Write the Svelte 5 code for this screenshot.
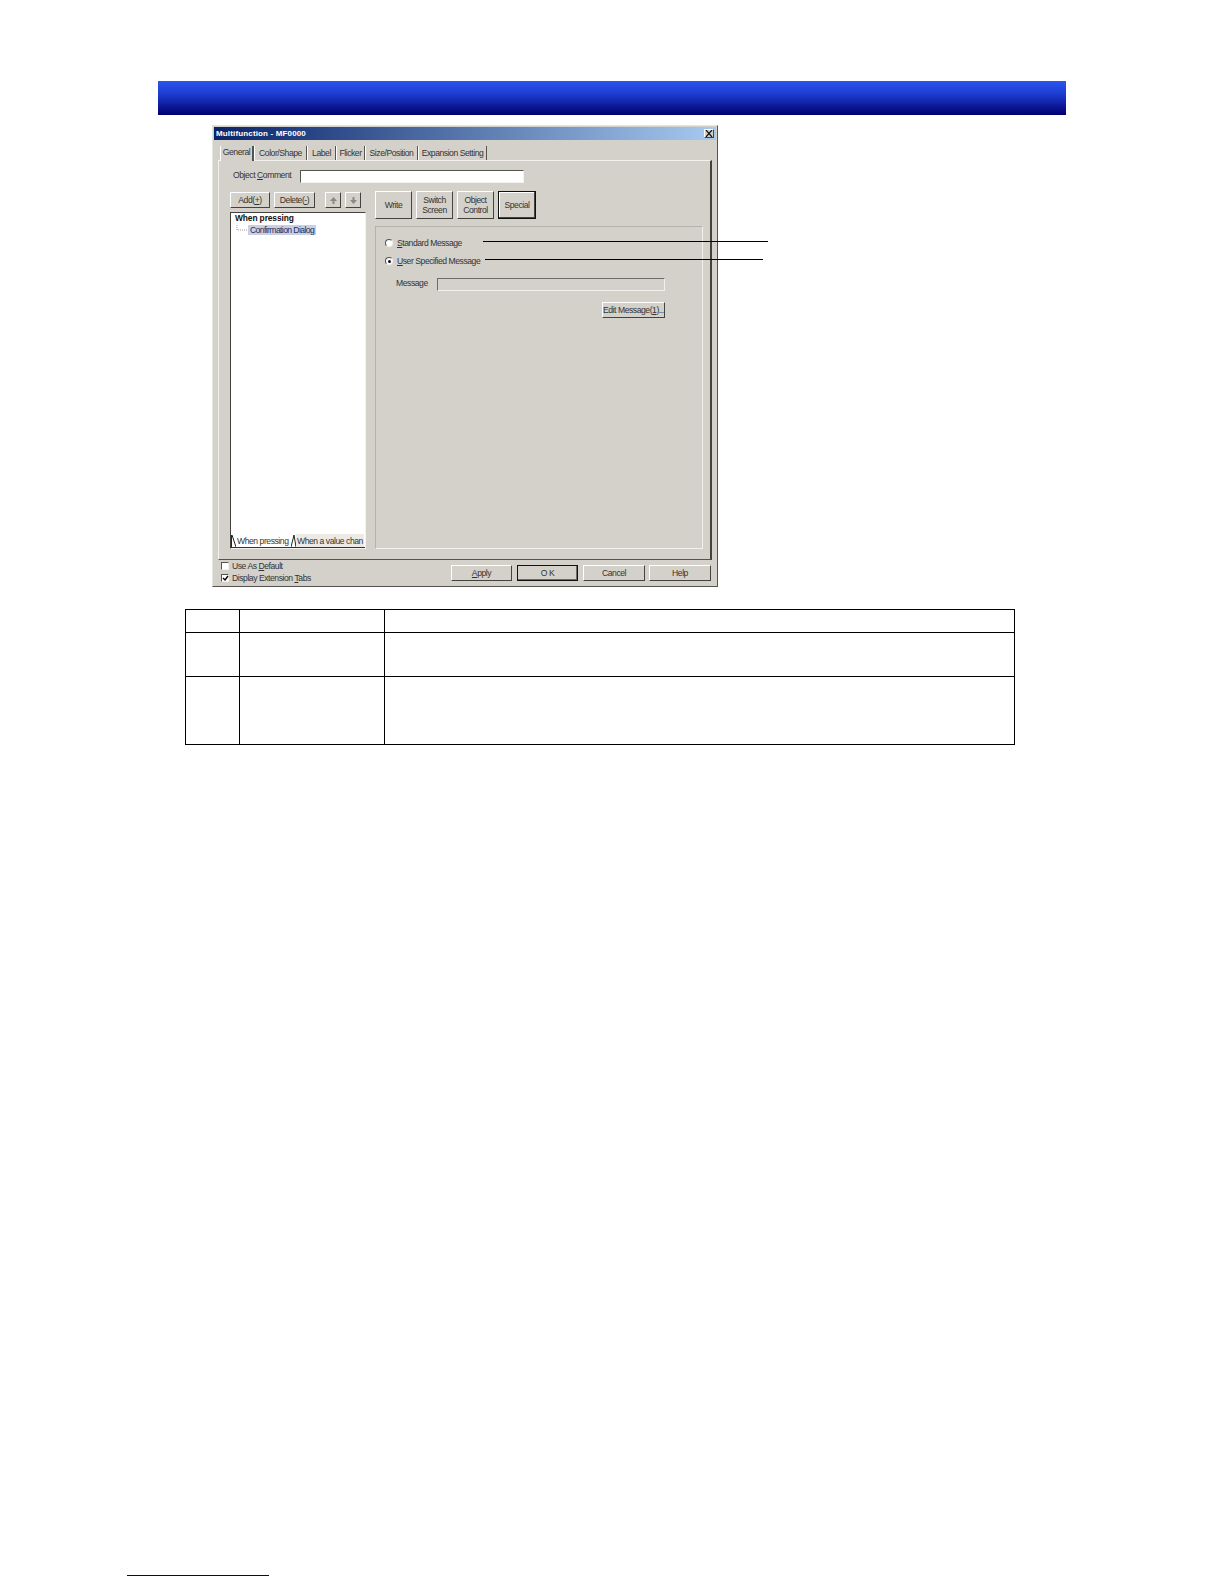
<script>
	const tabs = ['General', 'Color/Shape', 'Label', 'Flicker', 'Size/Position', 'Expansion Setting'];
	const tabWidths = [34, 53, 29, 29, 53, 69];
</script>

<main class="page">
	<div class="banner"></div>

	<section class="dialog">
		<header class="title">
			<span>Multifunction - MF0000</span>
			<button class="close" aria-label="Close">
				<svg width="8" height="7" viewBox="0 0 8 7"><path d="M1 0l6 7M7 0L1 7" stroke="#111" stroke-width="1.2" fill="none" /></svg>
			</button>
		</header>

		<nav class="tabs">
			{#each tabs as tab, i}
				<div class="tab" class:active={i === 0} style="width: {tabWidths[i]}px">{tab}</div>
			{/each}
		</nav>

		<div class="panel">
			<div class="comment-row">
				<label class="comment-label" for="comment">Object <u>C</u>omment</label>
				<input id="comment" class="comment-input" />
			</div>

			<div class="main">
				<div class="left">
					<div class="list-tools">
						<button class="btn add">Add(<u>+</u>)</button>
						<button class="btn delete">Delete(<u>-</u>)</button>
						<button class="btn arrow" aria-label="Move up">
							<svg width="9" height="9" viewBox="0 0 9 9"><path d="M4.5 1L8 5H5.5v3h-2V5H1z" fill="#8b8982" /></svg>
						</button>
						<button class="btn arrow" aria-label="Move down">
							<svg width="9" height="9" viewBox="0 0 9 9"><path d="M4.5 8L8 4H5.5V1h-2v3H1z" fill="#8b8982" /></svg>
						</button>
					</div>

					<div class="tree">
						<div class="tree-body">
							<div class="tree-root">When pressing</div>
							<div class="tree-item">
								<svg class="connector" width="11" height="10" viewBox="0 0 11 10"><path d="M1 0v5h10" stroke="#999" stroke-dasharray="1 1" fill="none" /></svg>
								<span class="selected">Confirmation Dialog</span>
							</div>
						</div>
						<div class="tree-tabs">
							<svg width="5" height="12" viewBox="0 0 5 12"><path d="M0.5 0v12M1 0l4 12" stroke="#222" fill="none" /></svg>
							<span class="tree-tab on">When pressing</span>
							<svg width="5" height="12" viewBox="0 0 5 12"><path d="M0 12L3 0l2 12" stroke="#222" fill="none" /></svg>
							<span class="tree-tab">When a value chan</span>
						</div>
					</div>
				</div>

				<div class="right">
					<div class="modes">
						<button class="btn mode w37">Write</button>
						<button class="btn mode w37">Switch<br />Screen</button>
						<button class="btn mode w37">Object<br />Control</button>
						<button class="btn mode special">Special</button>
					</div>

					<div class="group">
						<div class="radio-row">
							<span class="radio"></span>
							<span><u>S</u>tandard Message</span>
						</div>
						<div class="radio-row">
							<span class="radio checked"></span>
							<span><u>U</u>ser Specified Message</span>
						</div>
						<div class="message-row">
							<span class="message-label">Message</span>
							<div class="message-field"></div>
						</div>
						<div class="edit-row">
							<button class="btn edit">Edit Message(<u>1</u>)...</button>
						</div>
					</div>
				</div>
			</div>
		</div>

		<footer class="foot">
			<div class="checks">
				<div class="check-row">
					<span class="check"></span>
					<span>Use As <u>D</u>efault</span>
				</div>
				<div class="check-row">
					<span class="check">
						<svg width="7" height="7" viewBox="0 0 7 7"><path d="M1 3l2 2 3-4" stroke="#000" stroke-width="1.4" fill="none" /></svg>
					</span>
					<span>Display Extension <u>T</u>abs</span>
				</div>
			</div>
			<div class="actions">
				<button class="btn action"><u>A</u>pply</button>
				<button class="btn action default">O K</button>
				<button class="btn action">Cancel</button>
				<button class="btn action">Help</button>
			</div>
		</footer>

		<!-- callout lines run from the radio labels out past the dialog -->
		<div class="callout one"></div>
		<div class="callout two"></div>
	</section>

	<table class="info">
		<colgroup>
			<col class="c1" />
			<col class="c2" />
			<col />
		</colgroup>
		<tbody>
			<tr class="r1"><td></td><td></td><td></td></tr>
			<tr class="r2"><td></td><td></td><td></td></tr>
			<tr class="r3"><td></td><td></td><td></td></tr>
		</tbody>
	</table>

	<div class="page-link"></div>
</main>

<style>
	:global(body) {
		margin: 0;
		background: #fff;
	}

	.page {
		height: 1584px;
		padding-top: 81px;
		box-sizing: border-box;
		overflow: hidden;
		font-family: 'Liberation Sans', Arial, sans-serif;
	}

	.banner {
		width: 908px;
		height: 34px;
		margin-left: 158px;
		background: linear-gradient(#2b55ee, #1f3fd4 35%, #00006e);
	}

	.dialog {
		position: relative;
		box-sizing: border-box;
		width: 506px;
		height: 462px;
		margin: 10px 0 0 212px;
		padding: 1px;
		background: #d4d1ca;
		border: 1px solid;
		border-color: #e4e4e0 #55534e #55534e #e4e4e0;
		font-size: 8.6px;
		letter-spacing: -0.45px;
		color: #333;
		filter: blur(0.45px);
	}

	.title {
		display: flex;
		align-items: center;
		justify-content: space-between;
		height: 13px;
		padding: 0 2px;
		background: linear-gradient(90deg, #0a246a, #a6caf0);
		color: #fff;
		font-weight: bold;
		font-size: 8px;
		letter-spacing: 0.15px;
	}

	.close {
		display: flex;
		align-items: center;
		justify-content: center;
		width: 10px;
		height: 9px;
		padding: 0;
		background: #d4d1ca;
		border: 1px solid;
		border-color: #fff #444 #444 #fff;
	}

	.tabs {
		display: flex;
		height: 14px;
		margin: 6px 0 0 5px;
		padding-left: 1px;
	}

	.tab {
		box-sizing: border-box;
		flex: none;
		text-align: center;
		line-height: 15px;
		white-space: nowrap;
		border-right: 1px solid #55534e;
		border-left: 1px solid #fff;
	}

	.tab.active {
		height: 15px;
		line-height: 12px;
		position: relative;
		background: #d4d1ca;
		border-right-width: 2px;
	}

	.panel {
		box-sizing: border-box;
		height: 400px;
		margin: 0 4px;
		padding: 9px 0 0 10px;
		border: 1px solid;
		border-width: 1px 2px 1px 1px;
		border-color: #f2f1ee #44423e #55534e #f2f1ee;
	}

	.comment-row {
		display: flex;
		height: 13px;
	}

	.comment-label {
		width: 71px;
		padding-left: 4px;
		box-sizing: border-box;
		line-height: 11px;
		white-space: nowrap;
	}

	.comment-input {
		box-sizing: border-box;
		width: 224px;
		height: 13px;
		padding: 0;
		background: #fff;
		border: 1px solid;
		border-color: #55534e #f2f1ee #f2f1ee #55534e;
	}

	.main {
		display: flex;
		gap: 9px;
		margin-top: 8px;
	}

	.left {
		width: 137px;
		padding-top: 1px;
	}

	.btn {
		box-sizing: border-box;
		padding: 0;
		background: #d4d1ca;
		border: 1px solid;
		border-color: #fff #45433f #45433f #fff;
		font: inherit;
		letter-spacing: inherit;
		color: inherit;
		line-height: 10px;
	}

	.list-tools {
		display: flex;
		height: 16px;
		margin-left: 1px;
	}

	.add {
		width: 40px;
	}

	.delete {
		width: 41px;
		margin-left: 4px;
	}

	.arrow {
		display: flex;
		align-items: center;
		justify-content: center;
		width: 16px;
		margin-left: 4px;
	}

	.delete + .arrow {
		margin-left: 10px;
	}

	.tree {
		display: flex;
		flex-direction: column;
		box-sizing: border-box;
		width: 136px;
		height: 337px;
		margin: 4px 0 0 1px;
		background: #fff;
		border: 1px solid;
		border-color: #45433f #f2f1ee #f2f1ee #45433f;
	}

	.tree-body {
		flex: 1;
		padding: 0 0 0 4px;
	}

	.tree-root {
		font-weight: bold;
		font-size: 8.4px;
		letter-spacing: -0.1px;
		color: #111;
		line-height: 10px;
	}

	.tree-item {
		display: flex;
		align-items: center;
		height: 11px;
		margin-top: 1px;
	}

	.connector {
		margin: 0 1px 0 1px;
	}

	.selected {
		padding: 0 2px;
		background: #c9cfe4;
		color: #25305a;
		line-height: 10px;
		letter-spacing: -0.6px;
	}

	.tree-tabs {
		display: flex;
		align-items: center;
		height: 13px;
		overflow: hidden;
		border-bottom: 1px solid #333;
		white-space: nowrap;
	}

	.tree-tabs svg {
		flex: none;
	}

	.tree-tab {
		flex: none;
		line-height: 11px;
		padding: 2px 1px 0;
		background: #eceae5;
	}

	.tree-tab.on {
		background: #fff;
		width: 53px;
	}

	.right {
		width: 328px;
	}

	.modes {
		display: flex;
		gap: 4px;
		height: 28px;
	}

	.mode {
		width: 37px;
		padding-bottom: 1px;
	}

	.special {
		width: 38px;
		border: 1px solid #111;
		box-shadow: inset -1px -1px #45433f, inset 1px 1px #fff;
	}

	.group {
		box-sizing: border-box;
		height: 323px;
		margin-top: 7px;
		padding: 7px 37px 0 7px;
		border: 1px solid;
		border-color: #b5b2aa #f2f1ee #f2f1ee #b5b2aa;
	}

	.radio-row {
		display: flex;
		align-items: center;
		gap: 4px;
		height: 18px;
		padding-left: 2px;
	}

	.radio {
		box-sizing: border-box;
		display: flex;
		align-items: center;
		justify-content: center;
		width: 8px;
		height: 8px;
		background: #fff;
		border: 1px solid;
		border-color: #55534e #f2f1ee #f2f1ee #55534e;
		border-radius: 50%;
	}

	.radio.checked::after {
		content: '';
		width: 3px;
		height: 3px;
		background: #111;
		border-radius: 50%;
	}

	.message-row {
		display: flex;
		align-items: flex-start;
		height: 13px;
		margin-top: 8px;
		padding-left: 13px;
	}

	.message-label {
		width: 41px;
		line-height: 11px;
	}

	.message-field {
		flex: 1;
		height: 13px;
		box-sizing: border-box;
		border: 1px solid;
		border-color: #6e6c66 #f2f1ee #f2f1ee #6e6c66;
	}

	.edit-row {
		display: flex;
		justify-content: flex-end;
		margin-top: 11px;
	}

	.edit {
		width: 63px;
		height: 16px;
		white-space: nowrap;
	}

	.foot {
		display: flex;
		justify-content: space-between;
		padding: 0 5px 0 7px;
	}

	.check-row {
		display: flex;
		align-items: center;
		gap: 3px;
		height: 12px;
	}

	.check {
		box-sizing: border-box;
		display: flex;
		align-items: center;
		justify-content: center;
		width: 8px;
		height: 8px;
		background: #fff;
		border: 1px solid;
		border-color: #55534e #f2f1ee #f2f1ee #55534e;
	}

	.check svg {
		flex: none;
	}

	.actions {
		display: flex;
		gap: 5px;
		height: 16px;
		margin-top: 5px;
	}

	.action {
		width: 61px;
	}

	.action:nth-child(n + 3) {
		width: 62px;
	}

	.action:last-child {
		margin-left: -1px;
	}

	.default {
		border: 1px solid #111;
		box-shadow: inset -1px -1px #6e6c66;
	}

	.callout {
		position: absolute;
		height: 1px;
		background: #000;
	}

	.callout.one {
		left: 270px;
		top: 115px;
		width: 285px;
	}

	.callout.two {
		left: 272px;
		top: 133px;
		width: 278px;
	}

	.info {
		width: 830px;
		margin: 22px 0 0 185px;
		border-collapse: collapse;
		table-layout: fixed;
	}

	.info td {
		padding: 0;
		border: 1.25px solid #000;
	}

	.c1 {
		width: 54px;
	}

	.c2 {
		width: 145px;
	}

	.r1 {
		height: 23px;
	}

	.r2 {
		height: 44px;
	}

	.r3 {
		height: 68px;
	}

	.page-link {
		width: 142px;
		height: 1px;
		margin: 830px 0 0 127px;
		background: #000080;
	}
</style>
